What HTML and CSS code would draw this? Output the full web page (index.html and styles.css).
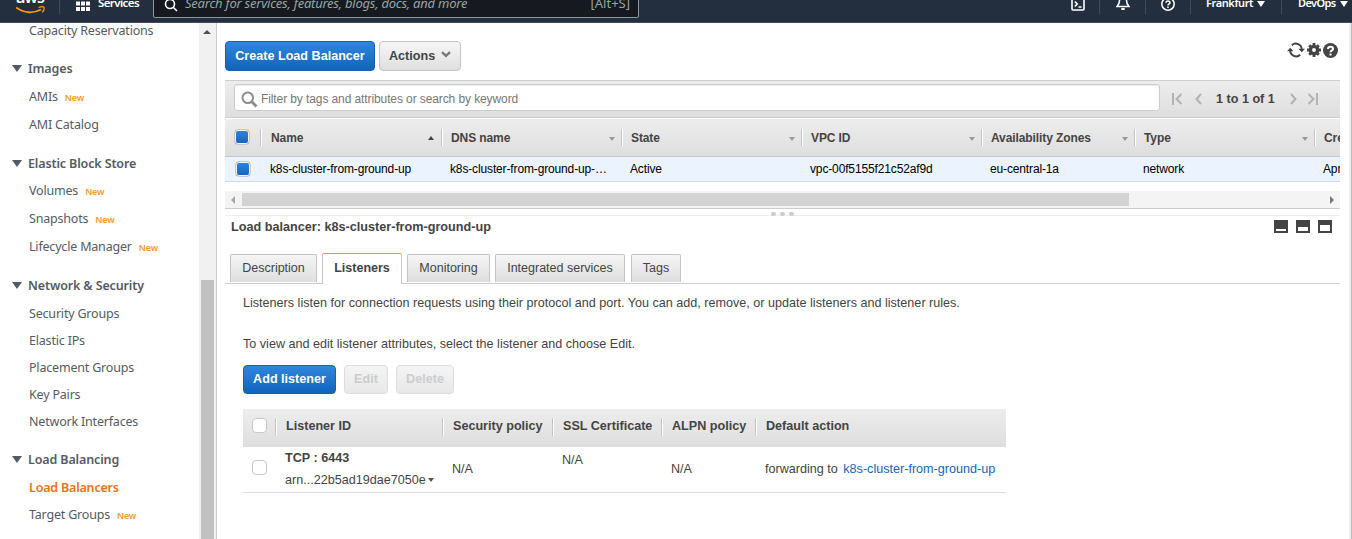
FILE: index.html
```html
<!DOCTYPE html>
<html lang="en">
<head>
<meta charset="utf-8">
<title>EC2 Load Balancers</title>
<link rel="stylesheet" href="styles.css">
</head>
<body>
<header class="nav">
  <div class="logo"><span class="logo-text">aws</span>
    <svg class="smile" width="30" height="10" viewBox="0 0 30 10"><path d="M0 1.500C8 7.500 18 7.500 25 3.500" fill="none" stroke="#f90" stroke-width="1.800"/><path d="M22.500 1.500C25 .6 27.500 .7 27.900 1.300c.4.900-.3 3.400-1.600 5" fill="none" stroke="#f90" stroke-width="1.300"/></svg>
  </div>
  <div class="services"><svg width="14" height="16" viewBox="0 0 14 16" fill="#fff"><path d="M0 0h4v4H0zM5 0h4v4H5zM10 0h4v4h-4zM0 5.500h4v4H0zM5 5.500h4v4H5zM10 5.500h4v4h-4zM0 11h4v4H0zM5 11h4v4H5zM10 11h4v4h-4z"/></svg><b>Services</b></div>
  <div class="search"><svg width="14" height="14" viewBox="0 0 14 14" fill="none" stroke="#fff" stroke-width="1.600"><circle cx="6" cy="6" r="4.500"/><path d="M9.200 9.200L13 13"/></svg><i>Search for services, features, blogs, docs, and more</i><span>[Alt+S]</span></div>
  <div class="tool shell"><svg width="14" height="14" viewBox="0 0 14 14" fill="none" stroke="#fff" stroke-width="1.600"><rect x="1" y="1" width="12" height="12" rx="1"/><path d="M3.800 4.500L6.300 7 3.800 9.500M7.500 10h3"/></svg></div>
  <div class="tool bell"><svg width="14" height="16" viewBox="0 0 14 16" fill="none" stroke="#fff" stroke-width="1.600"><path d="M3.500 5.500a3.500 3.500 0 0 1 7 0c0 3.500 1 4.500 2.500 6H1c1.500-1.500 2.500-2.500 2.500-6z"/><path d="M5.300 14h3.400" stroke-width="2"/></svg></div>
  <div class="tool help"><svg width="14" height="14" viewBox="0 0 14 14" fill="none" stroke="#fff" stroke-width="1.500"><circle cx="7" cy="7" r="6.200"/><path d="M5 5.700C5 3.300 9 3.300 9 5.700 9 7 7 7 7 8.500M7 9.600v1.500"/></svg></div>
  <div class="tool region"><b>Frankfurt</b><span class="down"></span></div>
  <div class="tool account"><b>DevOps</b><span class="down"></span></div>
</header>
<div class="page">
  <aside class="sidebar">
    <nav class="menu">
      <a class="item first"><span>Capacity Reservations</span></a>
      <h3><span>Images</span></h3>
      <a class="item tall"><span>AMIs</span><em>New</em></a>
      <a class="item tall"><span>AMI Catalog</span></a>
      <h3><span>Elastic Block Store</span></h3>
      <a class="item tall"><span>Volumes</span><em>New</em></a>
      <a class="item tall"><span>Snapshots</span><em>New</em></a>
      <a class="item tall"><span>Lifecycle Manager</span><em>New</em></a>
      <h3 class="net"><span>Network &amp; Security</span></h3>
      <a class="item"><span>Security Groups</span></a>
      <a class="item"><span>Elastic IPs</span></a>
      <a class="item"><span>Placement Groups</span></a>
      <a class="item"><span>Key Pairs</span></a>
      <a class="item"><span>Network Interfaces</span></a>
      <h3><span>Load Balancing</span></h3>
      <a class="item active"><span>Load Balancers</span></a>
      <a class="item"><span>Target Groups</span><em>New</em></a>
    </nav>
    <div class="vbar"><span class="up"></span><div class="vthumb"></div></div>
  </aside>
  <main class="main">
    <div class="actions">
      <button class="btn primary create">Create Load Balancer</button>
      <button class="btn act">Actions <svg width="10" height="7" viewBox="0 0 10 7"><path d="M1 1.200L5 4.800 9 1.200" fill="none" stroke="#777" stroke-width="2.400"/></svg></button>
      <div class="tools">
        <svg width="18" height="16" viewBox="0 0 18 16" fill="none" stroke="#444" stroke-width="2"><path d="M4.800 3.200A6 6 0 0 1 14.800 7.500M13.200 12.800A6 6 0 0 1 3.200 8.500"/><path d="M11.500 6.800H18L14.800 10.300zM0 9.200h6.500L3.200 5.700z" fill="#444" stroke="none"/></svg>
        <svg width="14" height="14" viewBox="0 0 14 14"><circle cx="7" cy="7" r="3.600" fill="none" stroke="#444" stroke-width="3.400"/><path d="M7 0v2.500M7 11.500V14M0 7h2.500M11.500 7H14M2.200 2.200l2 2M9.800 9.800l2 2M11.800 2.200l-2 2M4.200 9.800l-2 2" stroke="#444" stroke-width="2.800"/></svg>
        <svg width="15" height="15" viewBox="0 0 15 15"><circle cx="7.500" cy="7.500" r="7.500" fill="#444"/><path d="M5 6C5 3 10 3 10 6 10 7.500 7.500 7.300 7.500 9.300M7.500 10.500v2" fill="none" stroke="#fff" stroke-width="2"/></svg>
      </div>
    </div>
    <section class="grid">
      <div class="filter">
        <div class="input"><svg width="17" height="17" viewBox="0 0 17 17" fill="none" stroke="#8c8c8c"><circle cx="6.800" cy="6.800" r="5.300" stroke-width="2"/><path d="M10.800 10.800l4.700 4.700" stroke-width="3"/></svg><span>Filter by tags and attributes or search by keyword</span></div>
        <div class="pager">
          <svg width="10" height="12" viewBox="0 0 10 12"><path d="M1 0v12M9.500 1L4.500 6l5 5"/></svg>
          <svg width="7" height="12" viewBox="0 0 7 12"><path d="M6 1L1.500 6 6 11"/></svg>
          <b>1 to 1 of 1</b>
          <svg width="7" height="12" viewBox="0 0 7 12"><path d="M1 1l4.500 5L1 11"/></svg>
          <svg width="10" height="12" viewBox="0 0 10 12"><path d="M9 0v12M.5 1l5 5-5 5"/></svg>
        </div>
      </div>
      <div class="row head">
        <div><i class="check on"></i></div><div>Name<s class="up"></s></div><div>DNS name<s></s></div><div>State<s></s></div><div>VPC ID<s></s></div><div>Availability Zones<s></s></div><div>Type<s></s></div><div>Created At</div>
      </div>
      <div class="row data">
        <div><i class="check on"></i></div><div>k8s-cluster-from-ground-up</div><div>k8s-cluster-from-ground-up-…</div><div>Active</div><div>vpc-00f5155f21c52af9d</div><div>eu-central-1a</div><div>network</div><div>April 1</div>
      </div>
      <div class="hbar"><span class="left"></span><div class="hthumb"></div><span class="right"></span></div>
    </section>
    <div class="splitter"><i></i><i></i><i></i></div>
    <div class="title"><b>Load balancer: k8s-cluster-from-ground-up</b>
      <div class="panes"><i class="p1"></i><i class="p2"></i><i class="p3"></i></div>
    </div>
    <div class="tabs">
      <div class="tab t1">Description</div><div class="tab t2 sel">Listeners</div><div class="tab t3">Monitoring</div><div class="tab t4">Integrated services</div><div class="tab t5">Tags</div>
    </div>
    <section class="detail">
      <p class="d1">Listeners listen for connection requests using their protocol and port. You can add, remove, or update listeners and listener rules.</p>
      <p class="d2">To view and edit listener attributes, select the listener and choose Edit.</p>
      <div class="buttons"><button class="btn primary add">Add listener</button><button class="btn off edit">Edit</button><button class="btn off del">Delete</button></div>
      <div class="lt">
        <div class="lrow lhead"><div><i class="check"></i></div><div>Listener ID</div><div>Security policy</div><div>SSL Certificate</div><div>ALPN policy</div><div>Default action</div></div>
        <div class="lrow lbody"><div><i class="check"></i></div><div class="lid"><b>TCP : 6443</b><span>arn...22b5ad19dae7050e<u></u></span></div><div>N/A</div><div class="ssl">N/A</div><div>N/A</div><div>forwarding to <a>k8s-cluster-from-ground-up</a></div></div>
      </div>
    </section>
  </main>
  <div class="edge"></div>
</div>
</body>
</html>
```
FILE: styles.css
```css
* { box-sizing: border-box; }
body { margin: 0; height: 539px; overflow: hidden; background: #fff; color: #444; font: 12px/16px "Liberation Sans", Arial, sans-serif; }
svg { display: block; flex: none; }

.nav { display: flex; height: 23px; background: #232f3e; border-bottom: 1px solid #414d5b; color: #fff; font: 12px/16px "Noto Sans", sans-serif; overflow: hidden; }
.logo { width: 60px; height: 14px; border-right: 1px solid #414d5b; padding-left: 16px; flex: none; }
.logo-text { display: block; margin-top: -10px; height: 15px; line-height: 15px; font-size: 16px; font-weight: 600; letter-spacing: -.8px; }
.smile { margin-top: 1px; }
.services { display: flex; gap: 7px; width: 93px; padding: 0 0 0 16px; flex: none; margin-top: -4px; }
.services b { margin-top: -1px; line-height: 16px; font-weight: 600; font-size: 11.500px; letter-spacing: -.6px; margin-left: 1px; }
.search { display: flex; width: 486px; height: 36px; margin-top: -18px; border: 1px solid #8b9898; border-radius: 2px; background: #16191f; color: #95a5a6; padding: 14px 8px 0 10px; flex: none; font-size: 13px; }
.search svg { margin-top: 1px; }
.search i { margin: -2px auto 0 7px; letter-spacing: -.23px; }
.search span { margin-top: -2px; }
.tool { height: 14px; border-right: 1px solid #414d5b; flex: none; }
.tool b { font-weight: 600; font-size: 11px; line-height: 14px; margin-top: -4px; letter-spacing: -.4px; }
.shell { width: 61px; margin-left: 400px; padding-left: 0; }
.shell svg { margin: -3px 0 0 32px; }
.bell { width: 46px; }
.bell svg { margin: -5px 0 0 16px; }
.help { width: 45px; }
.help svg { margin: -3px 0 0 15px; }
.region { display: flex; width: 91px; padding-left: 15px; gap: 4px; }
.account { display: flex; border: 0; padding-left: 16px; gap: 4px; }
.account b { letter-spacing: -.6px; }
.down { margin-top: 1px; width: 0; height: 0; border: 4px solid transparent; border-top: 6px solid #fff; border-bottom: 0; }

.page { display: flex; height: 516px; overflow: hidden; }
.sidebar { display: flex; width: 217px; border-right: 1px solid #ccc; flex: none; }
.menu { width: 199px; font: 12.500px/27px "Noto Sans", sans-serif; letter-spacing: -.19px; color: #545b64; flex: none; }
.item { display: flex; height: 27px; padding-left: 29px; }
.tall { height: 28px; line-height: 28px; }
.first { height: 32px; line-height: 15px; }
.item em { margin-left: 7px; font-size: 9px; font-style: normal; font-weight: 600; color: #ff9926; padding-top: 1px; }
.active { color: #ec7211; font-weight: 600; }
.menu h3 { display: flex; align-items: center; gap: 6px; margin: 10px 0 0; height: 28px; padding-left: 12px; font-size: 12.500px; font-weight: 600; letter-spacing: -.13px; }
.menu .first + h3 { margin-top: -1px; height: 29px; }
.menu .net { height: 29px; }
.menu .active { margin-top: 1px; }
.menu h3::before { content: ""; border: 5px solid transparent; border-top: 7px solid #545b64; border-bottom: 0; }
.vbar { width: 17px; background: #f1f1f1; }
.vbar .up { display: block; width: 8px; margin: 7px 0 0 4px; border: 4px solid transparent; border-top: 0; border-bottom-color: #505050; }
.vthumb { width: 13px; height: 259px; margin: 246px 0 0 2px; background: #c1c1c1; }

.main { width: 1115px; margin-left: 8px; flex: none; }
.actions { display: flex; height: 57px; padding-top: 18px; }
.btn { height: 30px; border: 1px solid #c4c4c4; border-radius: 4px; padding: 0; background: linear-gradient(#f6f6f6, #dfdfdf); color: #444; font: bold 12.600px/26px "Liberation Sans", Arial, sans-serif; white-space: nowrap; }
.primary { border-color: #1560b0; background: linear-gradient(#2f86dd, #1264bb); color: #fff; }
.create { width: 150px; }
.act { display: flex; width: 82px; margin-left: 4px; padding-left: 9px; gap: 6px; line-height: 28px; }
.act svg { margin-top: 9px; }
.tools { display: flex; gap: 2px; align-items: center; margin-left: 826px; height: 18px; }
.grid { overflow: hidden; border-bottom: 1px solid #ccc; height: 129px; }
.filter { display: flex; height: 38px; border: solid #ccc; border-width: 1px 0; background: linear-gradient(#ededed, #dedede); padding-left: 9px; }
.input { display: flex; width: 926px; height: 27px; margin-top: 3px; border: 1px solid #ccc; border-radius: 3px; background: #fff; box-shadow: inset 0 1px 1px #eee; color: #777; padding: 5px 0 0 6px; gap: 3px; flex: none; line-height: 18px; letter-spacing: -.1px; }
.input svg { margin-top: 1px; }
.pager { display: flex; align-items: center; padding-left: 12px; height: 35px; }
.pager path { fill: none; stroke: #b2b2b2; stroke-width: 2; }
.pager b { margin: 0 15px 0 13px; width: 59px; white-space: nowrap; font-size: 12.600px; }
.pager svg:nth-child(2) { margin-left: 13px; }
.pager b { margin-left: 14px; }
.pager svg:nth-child(5) { margin-left: 11px; }
.row { display: grid; grid-template-columns: 35px 181px 180px 180px 180px 153px 180px 26px; white-space: nowrap; }
.row > div { position: relative; overflow: hidden; }
.head { height: 38px; margin-top: 1px; padding-top: 10px; border-bottom: 1px solid #c8c8c8; background: linear-gradient(#ededed, #dedede); font-weight: bold; line-height: 19px; letter-spacing: -.1px; }
.head > div { height: 17px; padding-left: 10px; border-left: 1px solid #c4c4c4; box-shadow: inset 1px 0 #fff; }
.head > div + div + div { padding-left: 9px; }
.head > div:first-child { border: 0; box-shadow: none; padding-left: 9px; }
.head s { position: absolute; right: 6px; top: 8px; border: 3px solid transparent; border-top: 4px solid #999; border-bottom: 0; }
.head s.up { top: 7px; right: 7px; border-top: 0; border-bottom: 4px solid #444; }
.check { display: block; width: 15px; height: 15px; border: 1px solid #c8c8c8; border-radius: 4px; background: #fff; }
.check.on { width: 16px; height: 16px; background: linear-gradient(#2f86dd, #1264bb); box-shadow: inset 0 0 0 1px #f4f4f4; }
.data { height: 25px; border-bottom: 1px solid #d5d9e2; background: #eaf3fe; color: #000; line-height: 24px; letter-spacing: -.14px; }
.data > div { padding-left: 10px; }
.data > div + div + div { padding-left: 9px; }
.data > div:first-child { padding: 4px 0 0 10px; }
.hbar { display: flex; align-items: center; height: 17px; margin-top: 9px; background: #f4f4f4; }
.hbar .left { margin: 0 7px 0 6px; border: 4px solid transparent; border-left: 0; border-right-color: #a8a8a8; }
.hthumb { width: 887px; height: 13px; background: #d3d3d3; }
.hbar .right { margin-left: 201px; border: 4px solid transparent; border-right: 0; border-left-color: #777; }
.splitter { display: flex; justify-content: center; gap: 4px; height: 7px; padding-top: 3px; border-bottom: 1px solid #eee; }
.splitter i { width: 5px; height: 4px; border-radius: 3px; background: #ccc; }
.title { display: flex; justify-content: space-between; height: 37px; padding: 3px 8px 0 6px; font-size: 12.650px; }
.panes { display: flex; gap: 8px; padding-top: 1px; }
.panes i { width: 14px; height: 13px; background: #444; border: 2px solid #444; border-bottom-width: 1px; }
.panes i::after { content: ""; display: block; background: #fff; height: 2px; margin-top: 7px; }
.panes .p2::after { height: 4px; margin-top: 5px; }
.panes .p3::after { height: 6px; margin-top: 3px; }
.tabs { display: flex; align-items: flex-end; gap: 5px; height: 31px; padding-left: 5px; border-bottom: 1px solid #ccc; }
.tab { height: 28px; margin-bottom: 1px; border: 1px solid #c4c4c4; border-bottom: 0; border-radius: 2px 2px 0 0; background: linear-gradient(#f5f5f5, #dedede); text-align: center; line-height: 27px; white-space: nowrap; font-size: 12.500px; }
.sel { height: 31px; margin-bottom: -1px; background: #fff; border-top-color: #f90; font-weight: bold; line-height: 29px; }
.t1 { width: 87px; } .t2 { width: 80px; } .t3 { width: 83px; } .t4 { width: 130px; } .t5 { width: 50px; margin-left: 1px; }
.detail { padding: 11px 0 0 18px; font-size: 12.600px; }
.detail p { margin: 0; height: 41px; white-space: nowrap; }
.detail .d2 { height: 29px; }
.buttons { display: flex; gap: 8px; height: 44px; }
.buttons .btn { height: 29px; line-height: 25px; }
.add { width: 93px; } .edit { width: 44px; } .del { width: 58px; }
.off { border-color: #ddd; background: linear-gradient(#f4f4f4, #e8e8e8); color: #ccc; }
.lt { width: 763px; }
.lrow { display: grid; grid-template-columns: 32px 167px 110px 109px 94px 251px; white-space: nowrap; }
.lhead { height: 38px; padding-top: 9px; border-bottom: 1px solid #ddd; background: linear-gradient(#ededed, #dedede); font-weight: bold; font-size: 12.600px; line-height: 17px; }
.lhead > div { height: 18px; padding-left: 10px; border-left: 1px solid #c4c4c4; box-shadow: inset 1px 0 #fff; }
.lhead > div:first-child { border: 0; box-shadow: none; padding-left: 9px; }
.lbody { height: 46px; border-bottom: 1px solid #ddd; line-height: 44px; }
.lbody > div { padding-left: 10px; }
.lbody > div:first-child { padding-left: 9px; }
.lbody .check { margin-top: 13px; }
.lbody .lid { line-height: 22px; }
.lid b, .lid span { display: flex; align-items: center; height: 22px; }
.lid u { margin-left: 2px; border: 3px solid transparent; border-top: 4px solid #555; border-bottom: 0; }
.lbody .ssl { line-height: 26px; }
.lbody a { color: #1166bb; margin-left: 2px; }
.edge { margin-left: 9px; width: 3px; background: #eee; border-right: 1px solid #bbb; }
```
